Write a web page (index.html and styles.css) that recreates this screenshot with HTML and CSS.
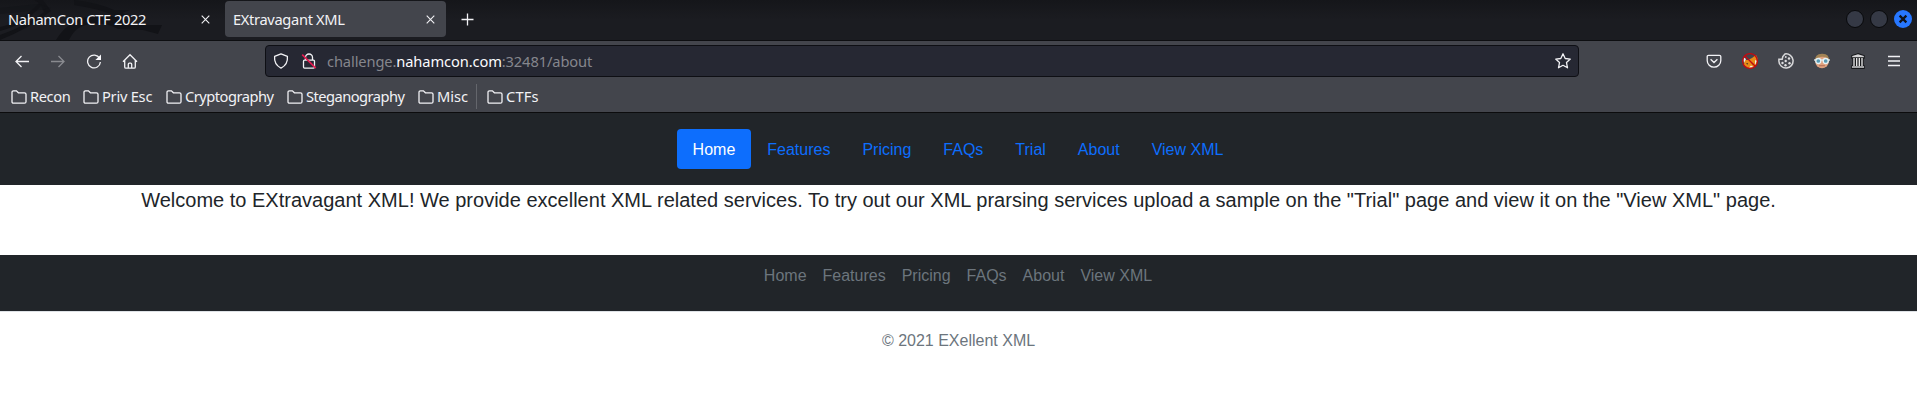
FILE: index.html
```html
<!DOCTYPE html>
<html lang="en">
<head>
<meta charset="utf-8">
<title>EXtravagant XML</title>
<link rel="stylesheet" href="styles.css">
</head>
<body>
<div class="browser">
  <div class="tabbar">
    <svg class="dragon" width="170" height="40" viewBox="0 0 170 40">
      <g fill="#121317">
        <path d="M0 27Q20 23 39 3L34 0H43L51 11Q30 28 0 40V35Q28 25 44 12L41 6Q24 25 0 31Z"/>
        <path d="M0 8L38 4L51 8L40 10L0 14Z" opacity=".5"/>
        <path d="M56 40Q69 18 94 16Q123 14 137 25L162 25L158 34L143 30L118 29Q105 22 91 24Q76 25 69 40Z"/>
        <path d="M74 0Q99 3 114 10L130 10L122 13L133 17L119 17Q97 8 74 5Z"/>
      </g>
    </svg>
    <div class="tab"><span>NahamCon CTF 2022</span><svg width="9" height="9" viewBox="0 0 9 9"><path d="M.7.7l7.6 7.6M8.3.7L.7 8.3"/></svg></div>
    <div class="tab tab-active"><span>EXtravagant XML</span><svg width="9" height="9" viewBox="0 0 9 9"><path d="M.7.7l7.6 7.6M8.3.7L.7 8.3"/></svg></div>
    <svg class="new-tab" width="13" height="13" viewBox="0 0 13 13"><path d="M6.5.5v12M.5 6.5h12"/></svg>
    <div class="window-buttons">
      <i></i><i></i>
      <svg width="18" height="18" viewBox="0 0 18 18"><circle cx="9" cy="9" r="9" fill="#2777ff" stroke="none"/><path d="M6.4 6.4l5.2 5.2M11.6 6.4l-5.2 5.2" stroke="#10131a" stroke-width="2.2" stroke-linecap="square"/></svg>
    </div>
  </div>
  <div class="toolbar">
    <div class="nav-buttons">
      <svg width="16" height="16" viewBox="0 0 16 16"><path d="M15 8.5H2M7.5 3L2 8.5 7.5 14"/></svg>
      <svg class="disabled" width="16" height="16" viewBox="0 0 16 16"><path d="M1 8.5h13M8.5 3L14 8.5 8.5 14"/></svg>
      <svg width="16" height="16" viewBox="0 0 16 16"><path d="M13.6 5.3A6.4 6.4 0 1 0 14.4 9"/><path d="M15 1.5v5.6H9.4z" fill="#fbfbfe" stroke="none"/></svg>
      <svg width="16" height="16" viewBox="0 0 16 16"><path d="M1 8.7L8 1.7l7 7M2.7 7.5v6.4q0 1.3 1.3 1.3h8q1.3 0 1.3-1.3V7.5M6.3 15.2v-4q0-1 1-1h1.4q1 0 1 1v4"/></svg>
    </div>
    <div class="urlbar">
      <svg width="16" height="16" viewBox="0 0 16 16"><path d="M8 .9L14.4 3.4Q15.2 11.5 8 15.1Q.8 11.5 1.6 3.4Z" stroke-linejoin="round"/></svg>
      <svg class="lock" width="16" height="16" viewBox="0 0 16 16"><path d="M4.500 7V4.500a3.500 3.500 0 0 1 7 0V7M3.500 7.200h9q1 0 1 1v5.900q0 1-1 1h-9q-1 0-1-1V8.200q0-1 1-1Z"/><path d="M1.200 1.700l13.500 13.500" stroke="#e31b50" stroke-width="1.700"/></svg>
      <span class="url">challenge.<b>nahamcon.com</b>:32481/about</span>
      <svg width="18" height="18" viewBox="0 0 18 18"><path d="M9 1.8l2.2 4.7 5.1.6-3.8 3.500 1 5.200L9 13.300l-4.500 2.500 1-5.200L1.700 7.100l5.100-.6z" stroke-linejoin="round"/></svg>
    </div>
    <div class="extensions">
      <svg width="16" height="16" viewBox="0 0 16 16"><path d="M2.5 2.3h11q1.3 0 1.3 1.3v3.8a6.8 6.8 0 0 1-13.6 0V3.6q0-1.3 1.3-1.3ZM4.6 6.2L8 9.5l3.4-3.3"/></svg>
      <svg width="16" height="16" viewBox="0 0 16 16"><path d="M2.5 7L6 7l4-2 4-3 1.5 3-.5 6-3.5 4H5L2 12z" fill="#e98b17" stroke="none"/><path d="M1 4l3 2-2 4zM13 7l2 1-2 4zM7 14.5l2-2 3 2z" fill="#f5eee7" stroke="none"/><path d="M4.5 10.5l1.5.5M10 11l1-.8" stroke="#39302c"/><circle cx="8" cy="8" r="7.4" stroke="#c30a12"/><path d="M2.8 2.8l10.4 10.4" stroke="#c30a12"/></svg>
      <svg width="16" height="16" viewBox="0 0 16 16"><path d="M7 .9A7.1 7.1 0 1 1 .9 8.3V6.2H4.2L4.8 3.5 7 .9Z" stroke="#d8d8da" stroke-width="1.5" fill="#484a51"/><g fill="#e0e0e2" stroke="none"><circle cx="7.7" cy="8" r="1.2"/><circle cx="11" cy="5.5" r="1.2"/><circle cx="4.5" cy="10" r="1.2"/><circle cx="7.5" cy="12.3" r="1.2"/><circle cx="11.5" cy="10.3" r="1.2"/><circle cx="7.8" cy="4" r=".9"/></g></svg>
      <svg width="16" height="16" viewBox="0 0 16 16"><g stroke="none"><circle cx="8" cy="8.5" r="6.8" fill="#dfa27f"/><path d="M1 8Q.5 1 8 .7T15 8L13 5Q8 2.5 4 5z" fill="#a28355"/><rect x="5" y="12" width="6" height="1.3" rx=".6" fill="#bb7860"/></g><path d="M0 7h16" stroke="#e7f2f5"/><g fill="#5799b2" stroke="#e7f2f5" stroke-width="1.3"><circle cx="4.3" cy="8" r="2.5"/><circle cx="11.7" cy="8" r="2.5"/></g></svg>
      <svg width="16" height="16" viewBox="0 0 16 16"><path d="M8 .8L2 2.8V5h1v8H2v2.3h12V13h-1V5h1V2.8z" fill="#17181b" stroke="#17181b" stroke-width="1.4"/><path d="M2.2 4.2V3L8 1.2 13.8 3v1.2z" fill="#d5d5d7" stroke="none"/><path d="M4 5v8M6.7 5v8M9.3 5v8M12 5v8" stroke="#eee" stroke-width="1.3"/><path d="M2 14h12" stroke="#d5d5d7" stroke-width="1.5"/></svg>
      <svg width="16" height="16" viewBox="0 0 16 16"><path d="M2 3.5h12M2 8h12M2 12.5h12"/></svg>
    </div>
  </div>
  <div class="bookmarks">
    <svg width="0" height="0"><defs><symbol id="folder" viewBox="0 0 16 14"><path d="M1 11.7V2.3Q1 .8 2.5.8H5.4L7.4 2.8H13.5Q15 2.8 15 4.3V11.7Q15 13.2 13.5 13.2H2.5Q1 13.2 1 11.7Z"/></symbol></defs></svg>
    <div class="mark recon"><svg width="16" height="14"><use href="#folder"/></svg><span>Recon</span></div>
    <div class="mark priv"><svg width="16" height="14"><use href="#folder"/></svg><span>Priv Esc</span></div>
    <div class="mark crypto"><svg width="16" height="14"><use href="#folder"/></svg><span>Cryptography</span></div>
    <div class="mark stego"><svg width="16" height="14"><use href="#folder"/></svg><span>Steganography</span></div>
    <div class="mark misc"><svg width="16" height="14"><use href="#folder"/></svg><span>Misc</span></div>
    <div class="mark ctfs"><svg width="16" height="14"><use href="#folder"/></svg><span>CTFs</span></div>
  </div>
</div>
<header class="site-header">
  <nav class="pills"><a class="active">Home</a><a>Features</a><a>Pricing</a><a>FAQs</a><a>Trial</a><a>About</a><a>View XML</a></nav>
</header>
<main class="lead">Welcome to EXtravagant XML! We provide excellent XML related services. To try out our XML prarsing services upload a sample on the "Trial" page and view it on the "View XML" page.</main>
<footer>
  <nav class="footer-nav"><a>Home</a><a>Features</a><a>Pricing</a><a>FAQs</a><a>About</a><a>View XML</a></nav>
  <p class="copyright">© 2021 EXellent XML</p>
</footer>
</body>
</html>
```
FILE: styles.css
```css
* { box-sizing: border-box; }
body { margin: 0; background: #fff; color: #212529; font: 16px/24px "Liberation Sans", Arial, sans-serif; overflow: hidden; }
svg { display: block; flex: none; fill: none; stroke: #f2f2f5; stroke-width: 1.3; }
.browser { height: 113px; background: #43454c; border-bottom: 1px solid #0c0c0d; color: #f2f2f5; font: 14.67px/20px "Noto Sans", sans-serif; white-space: nowrap; }
.tabbar { position: relative; display: flex; height: 41px; background: linear-gradient(#15161a, #1b1c21 50%); border-bottom: 1px solid #0d0e11; }
.dragon { position: absolute; left: 0; top: 0; stroke: none; }
.tab { position: relative; display: flex; align-items: center; justify-content: space-between; width: 221px; height: 36px; margin: 1px 4px 0 0; padding: 0 11px 0 8px; border-radius: 4px; letter-spacing: -.33px; }
.tab svg { stroke-width: 1.1; }
.tab-active { background: #43454c; }
.new-tab { margin: 13px 0 0 11px; }
.window-buttons { display: flex; gap: 6px; margin: 10px 5px 0 auto; }
.window-buttons i { width: 18px; height: 18px; border: 1px solid #08090b; border-radius: 50%; background: #353945; }
.toolbar { display: flex; align-items: center; height: 40px; padding: 0 15px 0 14px; }
.nav-buttons { display: flex; gap: 20px; width: 251px; }
.disabled { opacity: .4; }
.urlbar { display: flex; align-items: center; width: 1314px; height: 32px; padding: 0 6px 0 7px; border: 1px solid #0e0f14; border-radius: 4px; background: #262833; }
.lock { margin-left: 12px; }
.url { flex: 1; margin-left: 10px; color: #85868d; letter-spacing: -.11px; }
.url b { color: #fbfbfe; font-weight: 400; }
.extensions { display: flex; gap: 20px; margin-left: auto; }
.bookmarks { display: flex; align-items: center; height: 31px; padding-left: 11px; }
.mark { display: flex; align-items: center; gap: 3px; height: 25px; }
.mark span { padding-bottom: 1px; }
.recon { width: 72px; letter-spacing: -.4px; }
.priv { width: 83px; letter-spacing: -.25px; }
.crypto { width: 121px; letter-spacing: -.5px; }
.stego { width: 131px; letter-spacing: -.53px; }
.misc { width: 59px; border-right: 1px solid #64666c; }
.ctfs { margin-left: 10px; letter-spacing: .2px; }
.site-header { padding: 16px 0; background: #212529; }
.pills { display: flex; justify-content: center; padding-right: 1px; }
.pills a { padding: 9px 16px 7px; border-radius: 4px; color: #0d6efd; }
.pills .active { color: #fff; background: #0d6efd; }
.lead { height: 70px; font-size: 20px; line-height: 30px; text-align: center; white-space: nowrap; letter-spacing: .008px; }
.footer-nav { display: flex; justify-content: center; height: 57px; padding: 9px 1px 0 0; background: #212529; border-bottom: 1px solid #dee2e6; }
.footer-nav a { padding: 0 8px; color: #6c757d; }
.copyright { margin: 17px 0 0; text-align: center; color: #6c757d; }
```
